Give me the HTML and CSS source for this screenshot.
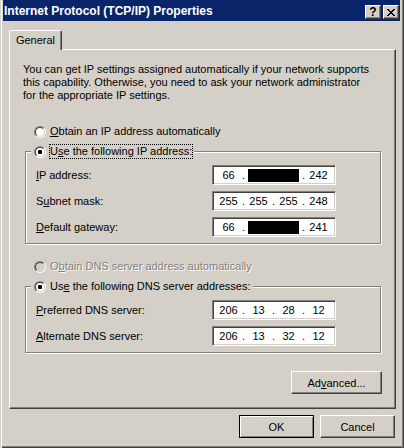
FILE: index.html
```html
<!DOCTYPE html>
<html>
<head>
<meta charset="utf-8">
<link rel="stylesheet" href="styles.css">
</head>
<body>
<div class="window">
  <div class="titlebar">
    <span class="title">Internet Protocol (TCP/IP) Properties</span>
    <div class="tbtns">
      <span class="tbtn help">?</span>
      <span class="tbtn close"><svg width="8" height="7" viewBox="0 0 8 7"><path fill="#000" d="M0 0h2v1H0zM6 0h2v1H6zM1 1h2v1H1zM5 1h2v1H5zM2 2h4v1H2zM3 3h2v1H3zM2 4h4v1H2zM1 5h2v1H1zM5 5h2v1H5zM0 6h2v1H0zM6 6h2v1H6z"/></svg></span>
    </div>
  </div>
  <div class="body">
    <div class="tabs"><div class="tab">General</div></div>
    <div class="panel">
      <p class="intro">You can get IP settings assigned automatically if your network supports<br>this capability. Otherwise, you need to ask your network administrator<br>for the appropriate IP settings.</p>

      <div class="radio-row first"><span class="radio"><i></i></span><span><u>O</u>btain an IP address automatically</span></div>

      <div class="group">
        <div class="group-head"><span class="radio checked"><i></i></span><span class="focus">U<u>s</u>e the following IP address:</span></div>
        <div class="field">
          <label><u>I</u>P address:</label>
          <div class="ipbox"><span class="oct">66</span><span class="dot">.</span><span class="mask"></span><span class="dot">.</span><span class="oct">242</span></div>
        </div>
        <div class="field gap">
          <label>S<u>u</u>bnet mask:</label>
          <div class="ipbox"><span class="oct">255</span><span class="dot">.</span><span class="oct">255</span><span class="dot">.</span><span class="oct">255</span><span class="dot">.</span><span class="oct">248</span></div>
        </div>
        <div class="field gap">
          <label><u>D</u>efault gateway:</label>
          <div class="ipbox"><span class="oct">66</span><span class="dot">.</span><span class="mask"></span><span class="dot">.</span><span class="oct">241</span></div>
        </div>
      </div>

      <div class="radio-row dns disabled"><span class="radio"><i></i></span><span>O<u>b</u>tain DNS server address automatically</span></div>

      <div class="group">
        <div class="group-head"><span class="radio checked"><i></i></span><span class="label-text">Us<u>e</u> the following DNS server addresses:</span></div>
        <div class="field">
          <label><u>P</u>referred DNS server:</label>
          <div class="ipbox"><span class="oct">206</span><span class="dot">.</span><span class="oct">13</span><span class="dot">.</span><span class="oct">28</span><span class="dot">.</span><span class="oct">12</span></div>
        </div>
        <div class="field gap">
          <label><u>A</u>lternate DNS server:</label>
          <div class="ipbox"><span class="oct">206</span><span class="dot">.</span><span class="oct">13</span><span class="dot">.</span><span class="oct">32</span><span class="dot">.</span><span class="oct">12</span></div>
        </div>
      </div>

      <div class="adv-row"><div class="btn adv">Ad<u>v</u>anced...</div></div>
    </div>
    <div class="dlg-buttons">
      <div class="btn default">OK</div>
      <div class="btn">Cancel</div>
    </div>
  </div>
</div>
</body>
</html>
```

FILE: styles.css
```css
* { box-sizing: border-box; }

body {
  margin: 0;
  background: #D4D0C8;
  font-family: "Liberation Sans", Arial, sans-serif;
  font-size: 11px;
  color: #000;
}

.window {
  width: 404px;
  height: 448px;
  background: #D4D0C8;
  padding: 0 4px 4px 3px;
  box-shadow: inset 1px 0 0 #D4D0C8, inset 2px 0 0 #fff,
              inset -1px 0 0 #404040, inset -2px 0 0 #808080,
              inset 0 -1px 0 #404040, inset 0 -2px 0 #808080;
}

.titlebar {
  height: 21px;
  background: #0A246A;
  color: #fff;
  display: flex;
  justify-content: space-between;
  align-items: flex-start;
  padding: 0 1px 0 1px;
}

.title {
  font-weight: bold;
  font-size: 12px;
  line-height: 14px;
  margin-top: 4px;
  white-space: nowrap;
}

.tbtns {
  display: flex;
  gap: 2px;
  margin-top: 5px;
}

.tbtn {
  width: 16px;
  height: 14px;
  background: #D4D0C8;
  border-top: 1px solid #fff;
  border-left: 1px solid #fff;
  border-right: 1px solid #404040;
  border-bottom: 1px solid #404040;
  box-shadow: inset -1px -1px 0 #808080;
  display: flex;
  align-items: center;
  justify-content: center;
  color: #000;
}

.help {
  font-weight: bold;
  font-size: 12px;
  line-height: 12px;
  padding-top: 0;
}

.body {
  padding: 9px 4px 0 6px;
}

.tabs {
  display: flex;
  height: 19px;
}

.tab {
  position: relative;
  z-index: 1;
  width: 53px;
  height: 20px;
  margin-bottom: -1px;
  background: #D4D0C8;
  border-top: 1px solid #fff;
  border-left: 1px solid #fff;
  border-right: 1px solid #404040;
  border-radius: 2px 2px 0 0;
  box-shadow: inset -1px 0 0 #808080;
  display: flex;
  align-items: center;
  justify-content: center;
  padding-bottom: 1px;
}

.panel {
  width: 387px;
  height: 360px;
  border-top: 1px solid #fff;
  border-left: 1px solid #fff;
  border-right: 1px solid #404040;
  border-bottom: 1px solid #404040;
  box-shadow: inset -1px -1px 0 #808080;
  padding: 13px 0 0 13px;
}

.intro {
  margin: 0;
  line-height: 13px;
  white-space: nowrap;
}

.radio-row {
  display: flex;
  align-items: center;
  gap: 4px;
  height: 13px;
  line-height: 13px;
  padding-left: 11px;
}

.radio-row.first { margin-top: 23px; }
.radio-row.dns { margin-top: 16px; }

.radio {
  width: 12px;
  height: 12px;
  flex: none;
  border-radius: 50%;
  border: 1px solid;
  border-color: #808080 #fff #fff #808080;
  display: flex;
}

.radio i {
  flex: 1;
  border-radius: 50%;
  border: 1px solid;
  border-color: #404040 #D4D0C8 #D4D0C8 #404040;
  background: #fff;
  display: flex;
  align-items: center;
  justify-content: center;
}

.radio.checked i::after {
  content: "";
  width: 4px;
  height: 4px;
  background: #000;
  border-radius: 1px;
}

.disabled { color: #808080; text-shadow: 1px 1px 0 #fff; }
.disabled .radio i { background: #D4D0C8; }

.group {
  width: 356px;
  margin-left: 2px;
  margin-top: 13px;
  border: 1px solid #808080;
  box-shadow: inset 1px 1px 0 #fff, 1px 1px 0 #fff;
  padding-bottom: 6px;
}

.group-head {
  display: flex;
  align-items: center;
  gap: 4px;
  width: max-content;
  height: 13px;
  line-height: 13px;
  margin: -7px 0 0 5px;
  padding: 0 2px 0 3px;
  background: #D4D0C8;
}

.focus {
  outline: 1px dotted #000;
}

.field {
  display: flex;
  align-items: center;
  height: 20px;
  padding-left: 10px;
  margin-top: 7px;
}

.field.gap { margin-top: 6px; }

.field label {
  width: 176px;
}

.ipbox {
  width: 124px;
  height: 20px;
  background: #fff;
  border: 1px solid;
  border-color: #808080 #fff #fff #808080;
  box-shadow: inset 1px 1px 0 #404040, inset -1px -1px 0 #D4D0C8;
  display: flex;
  align-items: center;
  padding-left: 3px;
}

.oct {
  width: 25px;
  text-align: center;
}

.dot {
  width: 5px;
  text-align: center;
}

.mask {
  width: 51px;
  height: 13px;
  margin: 0 2px;
  background: #000;
}

.adv-row {
  width: 357px;
  margin: 18px 0 0 2px;
  display: flex;
  justify-content: flex-end;
}

.btn {
  height: 23px;
  background: #D4D0C8;
  border-top: 1px solid #fff;
  border-left: 1px solid #fff;
  border-right: 1px solid #404040;
  border-bottom: 1px solid #404040;
  box-shadow: inset -1px -1px 0 #808080;
  display: flex;
  align-items: center;
  justify-content: center;
}

.btn.adv { width: 91px; }

.dlg-buttons {
  display: flex;
  justify-content: flex-end;
  gap: 6px;
  margin: 6px 1px 0 0;
}

.dlg-buttons .btn { width: 75px; }

.btn.default {
  border: 1px solid #000;
  box-shadow: inset 1px 1px 0 #fff, inset -1px -1px 0 #808080;
}

u { text-underline-offset: 1px; }
```
